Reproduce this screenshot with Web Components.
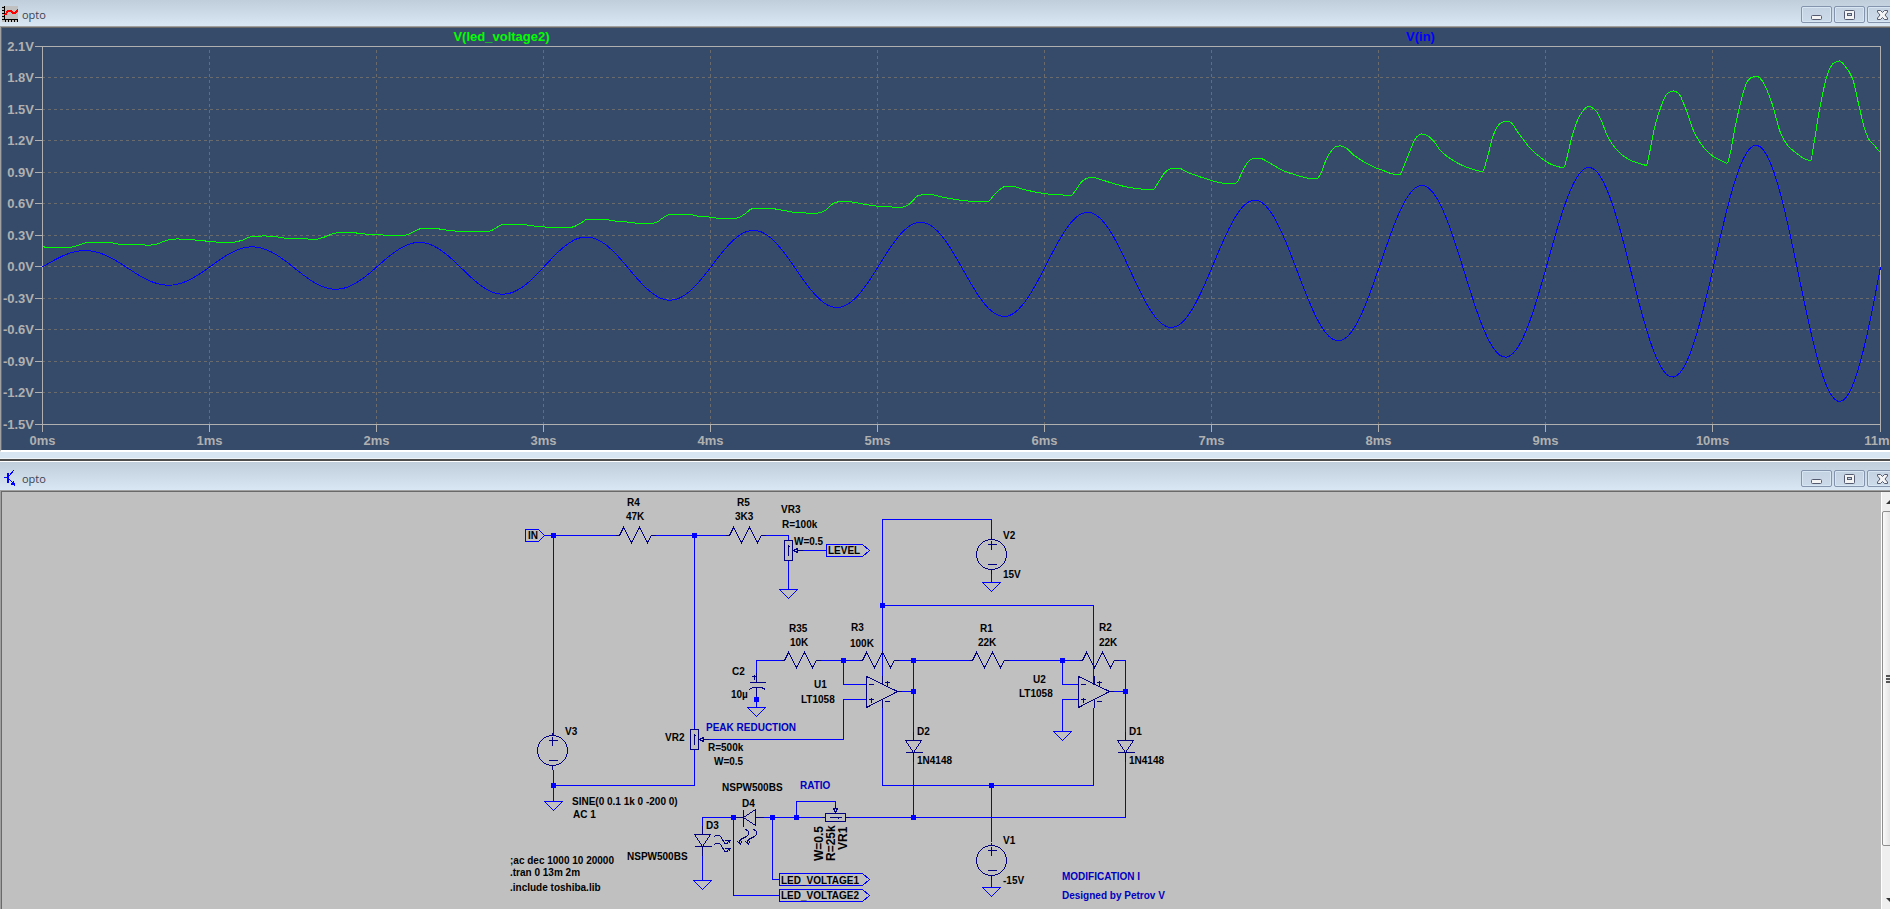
<!DOCTYPE html>
<html lang="en">
<head>
<meta charset="utf-8">
<title>opto</title>
<style>
  html, body {
    height: 100%;
    margin: 0;
    overflow: hidden;
    background: #d7e4f2;
  }
</style>
</head>
<body>
<sim-desktop>
  <mdi-window label="opto">
    <svg slot="icon" width="16" height="16" shape-rendering="crispEdges" aria-hidden="true">
      <rect width="16" height="16" fill="#c0c0c0"/>
      <path d="M2 0h1v13h13v1H2zM0 1h2v1H0zM0 4h2v1H0zM0 7h2v1H0zM0 10h2v1H0zM0 13h2v1H0zM3 14h1v2H3zM6 14h1v2H6zM9 14h1v2H9zM12 14h1v2h-1zM15 14h1v2h-1z" fill="#000"/>
      <path d="M3 9l3-4h3l2 2h2l3-3" fill="none" stroke="#f00" stroke-width="2"/>
    </svg>
    <wave-plot></wave-plot>
  </mdi-window>
  <mdi-window label="opto" class="lower">
    <svg slot="icon" width="16" height="16" shape-rendering="crispEdges" aria-hidden="true">
      <path d="M2 7.500h3M7 6l5-6M7 9l5 5" fill="none" stroke="#00f"/>
      <path d="M5 3h2v10H5zM9 13h2v-2h1v2h1v3h-1v-1h-3z" fill="#00f"/>
    </svg>
    <circuit-sheet></circuit-sheet>
    <scroll-strip></scroll-strip>
  </mdi-window>
</sim-desktop>

<script>
class SimDesktop extends HTMLElement {
  constructor(){
    super();
    this.attachShadow({mode: "open"});
  }

  connectedCallback() {
    // the windows run slightly past the right edge of the desktop
    this.shadowRoot.innerHTML = /* html */`
    <style>
      :host {
        display: grid;
        grid-template-rows: 459fr 450fr;
        grid-template-columns: minmax(0, 1fr);
        height: 100%;
        margin-right: -8px;
      }
    </style>
    <slot></slot>
    `
  }
}

class MdiWindow extends HTMLElement {
  constructor(){
    super();
    this.attachShadow({mode: "open"});
  }

  static get styles(){
    return /* css */`
      :host {
        display: flex;
        flex-direction: column;
        min-height: 0;
        box-sizing: border-box;
        border-bottom: 1px solid #eef3f8;
        background: #d7e4f2;
      }

      :host(.lower) {
        border-top: 2px solid #4d4d4d;
        border-bottom: 0;
        box-shadow: inset 0 1px #fff;
      }

      header {
        display: flex;
        align-items: flex-end;
        gap: 4px;
        height: 23px;
        padding: 0 0 3px 2px;
        background: linear-gradient(#c0cedb, #d9e6f4);
      }

      :host(.lower) header {
        height: 25px;
        margin-top: 1px;
      }

      ::slotted([slot="icon"]) {
        display: block;
        margin-bottom: 1px;
      }

      h1 {
        flex: 1;
        margin: 0;
        font: 11px/16px "Open Sans", "Noto Sans", sans-serif;
        color: #3c4350;
      }

      .buttons {
        display: flex;
        gap: 2px;
      }

      button {
        width: 31px;
        height: 17px;
        padding: 0;
        border: 1px solid #8494ad;
        border-radius: 2px;
        background: linear-gradient(#c4d2e1, #ccdbea);
        box-shadow: inset 0 0 0 1px #d8e5f2;
      }

      button svg {
        display: block;
        margin: 0 auto;
      }

      .client {
        flex: 1;
        min-height: 0;
        display: flex;
        border: 2px solid;
        border-color: #a0a0a0 #fff #fff #a0a0a0;
        box-shadow: inset 1px 1px #696969;
        border-width: 1px 0 2px 1px;
        padding: 1px 0 0 1px;
        margin-bottom: 6px;
      }

      :host(.lower) .client {
        border-bottom: 0;
        margin-bottom: 0;
      }
    `
  }

  connectedCallback() {
    const glyph = d => `<svg width="11" height="10" fill="#f4f4f4" stroke="#545a70" aria-hidden="true">${d}</svg>`;
    this.shadowRoot.innerHTML = /* html */`
    <style>${MdiWindow.styles}</style>
    <header>
      <slot name="icon"></slot>
      <h1>${this.getAttribute("label")}</h1>
      <div class="buttons">
        <button aria-label="Minimize">${glyph('<rect x=".5" y="5.5" width="10" height="4" rx="1"/>')}</button>
        <button aria-label="Maximize">${glyph('<rect x=".5" y=".5" width="10" height="9" rx="1"/><rect x="3.5" y="3.5" width="4" height="2" fill="#c4d2e1"/>')}</button>
        <button aria-label="Close">${glyph('<path d="M.5 .5h3l2 2 2-2h3v1.500L8 5l2.500 3v1.500h-3l-2-2-2 2h-3V8L3 5 .5 2z"/>')}</button>
      </div>
    </header>
    <div class="client"><slot></slot></div>
    `
  }
}

class WavePlot extends HTMLElement {
  constructor(){
    super();
    this.attachShadow({mode: "open"});
  }

  static get styles(){
    return /* css */`
      :host {
        display: block;
        flex: 1;
        min-width: 0;
        overflow: hidden;
        background: #364b6a;
      }

      svg {
        display: block;
        width: 100%;
        height: 100%;
      }

      text {
        font: bold 13px "Liberation Sans", Arial, sans-serif;
        fill: #b0b0b0;
      }

      path {
        fill: none;
        stroke-width: 1;
        shape-rendering: crispEdges;
      }

      .axis { stroke: #b0b0b0; }
      .grid { stroke: #6b6b6b; stroke-dasharray: 3 3; }
      .led { stroke: #00ff00; }
      .in { stroke: #0000ff; }
      text.led { fill: #00ff00; stroke: none; }
      text.in { fill: #0000ff; stroke: none; }
    `
  }

  connectedCallback() {
    this.shadowRoot.innerHTML = `<style>${WavePlot.styles}</style><svg role="img" aria-label="Transient analysis"></svg>`;
    this.draw();
    new ResizeObserver(() => this.draw()).observe(this);
  }

  // cubic segments through all points, handles kept to a third of each step
  smooth(pts) {
    const slope = pts.map((p, i) => {
      const a = pts[i - 1], b = pts[i + 1];
      if (!a || !b) return 0;
      const s1 = (p[1] - a[1]) / (p[0] - a[0]);
      const s2 = (b[1] - p[1]) / (b[0] - p[0]);
      return s1 * s2 <= 0 ? 0 : 2 * s1 * s2 / (s1 + s2);
    });
    let d = `M${pts[0]}`;
    for (let i = 1; i < pts.length; i++) {
      const [x0, y0] = pts[i - 1], [x1, y1] = pts[i];
      const h = (x1 - x0) / 3;
      d += `C${x0 + h} ${y0 + h * slope[i - 1]} ${x1 - h} ${y1 - h * slope[i]} ${x1} ${y1}`;
    }
    return d;
  }

  draw() {
    const box = this.getBoundingClientRect();
    const left = 40, top = 18;
    const right = Math.round(box.width) - 18;
    const bottom = Math.round(box.height) - 26;
    const x = ms => left + (right - left) * ms / 11;
    const y = v => top + (bottom - top) * (2.1 - v) / 3.6;
    const mid = n => Math.floor(n) + 0.5;

    let grid = "", axis = "", labels = "";
    for (let i = 0; i <= 12; i++) {
      const v = (21 - 3 * i) / 10;
      const py = mid(y(v));
      if (i > 0 && i < 12) grid += `M${left} ${py}H${right}`;
      axis += `M${left - 7} ${py}h7`;
      labels += `<text x="${left - 8}" y="${py + 4.5}" text-anchor="end">${v.toFixed(1)}V</text>`;
    }
    for (let ms = 0; ms <= 11; ms++) {
      const px = mid(x(ms));
      if (ms > 0 && ms < 11) grid += `M${px} ${top + 4}V${bottom}`;
      axis += `M${px} ${bottom}v8`;
      labels += `<text x="${px}" y="${bottom + 21}" text-anchor="middle">${ms}ms</text>`;
    }
    axis += `M${left} ${top + 0.5}H${right + 0.5}V${bottom + 0.5}H${left + 0.5}V${top}`;

    // SINE(0 0.1 1k 0 -200 0), saved from 2 ms on
    const sine = [];
    for (let t = 0; t <= 11.0001; t += 0.02) {
      const v = 0.1 * Math.exp(0.2 * (t + 2)) * Math.sin(2 * Math.PI * t);
      sine.push(`${x(t) + 0.5} ${y(v) + 0.5}`);
    }

    const led = WavePlot.led.map(([u, w]) =>
      [x((u - 106) / 415.9) + 0.5, y((801 - w) / 314.8) + 0.5]);

    this.shadowRoot.querySelector("svg").innerHTML = `
      <path class="grid" d="${grid}"/>
      <path class="axis" d="${axis}"/>
      ${labels}
      <path class="led" d="${this.smooth(led)}"/>
      <path class="in" d="M${sine.join("L")}"/>
      <text class="led" x="${x(2.75)}" y="13" text-anchor="middle">V(led_voltage2)</text>
      <text class="in" x="${x(8.25)}" y="13" text-anchor="middle">V(in)</text>`;
  }
}

// V(led_voltage2): three runs of samples, each run 1568 units of time long
WavePlot.led = [
  "106,739 114,742 172,742 210,730 220,727 270,727 300,733 355,734 368,736 388,733 422,719 440,717 475,719 520,724 552,727 580,727 605,720 628,709 660,708 685,710 715,715 765,717 785,718 808,711 832,700 850,697 878,698 908,702 950,705 1008,706 1030,695 1052,685 1078,685 1110,690 1145,694 1218,694 1235,684 1250,674 1298,674 1352,681 1422,682 1445,670 1462,658 1500,658 1530,663",
  "0,667 20,670 55,670 70,665 78,657 102,643 148,643 165,648 205,652 222,655 265,655 285,643 305,626 345,625 385,632 410,637 465,640 483,634 510,608 530,604 545,605 590,614 620,619 678,622 695,613 718,587 735,583 750,584 780,592 825,601 855,604 892,604 905,587 925,565 935,559 955,560 985,570 1040,582 1098,586 1110,570 1125,545 1140,534 1152,532 1170,538 1210,553 1245,563 1285,568 1303,568 1315,548 1333,516 1350,505 1366,505 1390,518 1425,533 1465,547 1485,551 1508,550 1525,513 1540,484 1552,476",
  "0,475 20,486 60,513 95,527 125,535 143,535 150,525 165,480 175,458 188,441 200,438 213,443 235,467 285,502 310,513 335,523 349,523 358,500 372,458 385,421 395,406 403,402 416,406 435,427 450,453 490,488 520,504 545,513 554,514 566,475 580,410 588,387 597,372 612,364 624,367 640,393 670,441 700,474 725,493 745,501 756,503 763,480 777,410 795,350 810,325 818,319 836,332 848,357 868,415 895,458 915,476 940,489 962,496 968,470 983,380 1000,315 1008,292 1017,278 1030,273 1042,280 1057,317 1083,402 1105,443 1128,469 1150,483 1163,490 1169,470 1184,375 1205,270 1212,248 1222,234 1237,229 1250,242 1262,270 1276,315 1297,402 1315,438 1340,464 1360,479 1371,482 1378,440 1392,335 1410,235 1417,210 1428,190 1442,183 1455,196 1475,235 1490,310 1505,385 1517,420 1530,436 1543,455"
].flatMap((run, i) => run.split(" ").map(p => {
  const [u, w] = p.split(",").map(Number);
  return [u + i * 1568, w];
}));

class CircuitSheet extends HTMLElement {
  constructor(){
    super();
    this.attachShadow({mode: "open"});
  }

  static get styles(){
    return /* css */`
      :host {
        display: block;
        flex: 1;
        min-width: 0;
        overflow: hidden;
        background: #c0c0c0;
      }

      svg {
        display: block;
        width: 100%;
        height: 100%;
      }

      path, circle {
        fill: none;
        stroke-width: 1;
        shape-rendering: crispEdges;
      }

      .wire { stroke: #0000ff; }
      .part { stroke: #000080; }
      .node { fill: #0000ff; stroke: none; }

      text {
        font: bold 10px "Liberation Sans", Arial, sans-serif;
        fill: #000;
      }

      text.note { fill: #0000c0; }
      text.tall { font-size: 12px; }
    `
  }

  resistor(x, y) {
    return `M${x - 4} ${y}h4l4 -8 8 15 8 -15 8 15 4 -7h4`;
  }

  source(x, y) {
    return `<circle class="part" cx="${x}" cy="${y}" r="15"/>
      <path class="part" d="M${x - 4} ${y - 10}h9M${x} ${y - 18}v3M${x} ${y - 14}v9M${x - 4} ${y + 10}h9M${x} ${y + 15}v4"/>`;
  }

  opamp(x, y) {
    return `M${x} ${y - 15}V${y + 16}L${x + 31} ${y}ZM${x + 2} ${y - 7}h5M${x + 2} ${y + 8}h5m-2 -2v5
      M${x + 18} ${y - 9}h5m-2 -2v5M${x + 18} ${y + 10}h5M${x + 16} ${y - 16}v9M${x + 16} ${y + 8}v8M${x + 31} ${y}h4`;
  }

  diode(x, y) {
    return `M${x} ${y - 9}v9M${x - 8} ${y}h16l-8 12zM${x - 8} ${y + 12}h17M${x} ${y + 12}v9`;
  }

  ground(x, y) {
    return `M${x - 9} ${y}h18l-9 9z`;
  }

  pot(x, y) {
    return `M${x - 4} ${y - 10}h8v20h-8zM${x} ${y + 5}v-11m-1 2h2M${x + 5} ${y}l4 -2v4zM${x + 9} ${y}h5`;
  }

  flag(x, y, body) {
    return `M${x} ${y - 6}h${body}l7 6 -7 6h-${body}z`;
  }

  connectedCallback() {
    const wires = [
      "M544 55H615M655 55H725M765 55H788V60M788 80V109M802 70H826",
      "M553 55V254M553 289V321M553 305H694V269M694 55V249",
      "M708 259H843V219H866M843 180V204H866M820 180H858M898 180H968M1008 180H1078M1118 180H1125V251",
      "M780 180H756V196M756 213V227M882 204V39H991V56M991 93V102M882 125H1093V204",
      "M1078 204H1062V180M1078 219H1062V251M897 211H913M1109 211H1125M913 180V251",
      "M882 227V305H1093V227M991 305V361M991 398V407M913 281V337M1125 281V337H849",
      "M759 337H821M796 337V321H835V326M739 337H702V347M702 374V400M733 337V415H779M772 337V399H779",
      this.flag(826, 70, 36), this.flag(779, 399, 83), this.flag(779, 415, 83),
      "M525 49H538L544 55 538 61H525Z",
      this.ground(788, 109), this.ground(553, 321), this.ground(756, 227), this.ground(991, 102),
      this.ground(1062, 251), this.ground(991, 407), this.ground(702, 400)
    ];

    const parts = [
      this.resistor(619, 55), this.resistor(729, 55), this.resistor(784, 180),
      this.resistor(862, 180), this.resistor(972, 180), this.resistor(1082, 180),
      this.opamp(866, 211), this.opamp(1078, 211),
      this.diode(913, 260), this.diode(1125, 260), this.diode(702, 354),
      this.pot(788, 70), this.pot(694, 259),
      // VR1 lies on its side, wiper on top
      "M825 333h20v8h-20zM829 337h12m-3 -1v2M835 332l-2 -4h4zM835 328v-4M821 337h4M845 337h4",
      // C2
      "M756 192v10M749 202h16M749 209l3 -2h9l4 2M756 207v8M751 196h5m-2 -2v5",
      // D4 and the light arrows of both LEDs
      "M743 329v17M755 329v16l-12 -8zM735 337h8M755 337h8",
      "M714 356C719 352 721 357 723 361S727 363 728 361M724 360h6l-2 3",
      "M714 364C719 360 721 365 723 369S727 371 728 369M724 368h6l-2 3",
      "M745 349C750 351 749 355 744 357S738 361 740 363M737 361l3 3 1 -3",
      "M753 349C758 351 757 355 752 357S746 361 748 363M745 361l3 3 1 -3"
    ];

    const nodes = [
      [553, 55], [694, 55], [553, 305], [882, 125], [843, 180], [913, 180], [1062, 180], [913, 211],
      [1125, 211], [756, 219], [991, 305], [913, 337], [733, 337], [772, 337], [796, 337]
    ];

    const texts = [
      [528, 59, "IN"], [627, 26, "R4"], [626, 40, "47K"], [737, 26, "R5"], [735, 40, "3K3"],
      [781, 33, "VR3"], [782, 48, "R=100k"], [794, 65, "W=0.5"], [828, 74, "LEVEL"],
      [1003, 59, "V2"], [1003, 98, "15V"],
      [789, 152, "R35"], [790, 166, "10K"], [851, 151, "R3"], [850, 167, "100K"],
      [980, 152, "R1"], [978, 166, "22K"], [1099, 151, "R2"], [1099, 166, "22K"],
      [732, 195, "C2"], [731, 218, "10µ"], [814, 208, "U1"], [801, 223, "LT1058"],
      [1033, 203, "U2"], [1019, 217, "LT1058"],
      [565, 255, "V3"], [665, 261, "VR2"], [708, 271, "R=500k"], [714, 285, "W=0.5"],
      [917, 255, "D2"], [917, 284, "1N4148"], [1129, 255, "D1"], [1129, 284, "1N4148"],
      [572, 325, "SINE(0 0.1 1k 0 -200 0)"], [573, 338, "AC 1"],
      [722, 311, "NSPW500BS"], [742, 327, "D4"], [706, 349, "D3"], [627, 380, "NSPW500BS"],
      [510, 384, ";ac dec 1000 10 20000"], [510, 396, ".tran 0 13m 2m"], [510, 411, ".include toshiba.lib"],
      [781, 404, "LED_VOLTAGE1"], [781, 419, "LED_VOLTAGE2"],
      [1003, 364, "V1"], [1003, 404, "-15V"],
      [706, 251, "PEAK REDUCTION", "note"], [800, 309, "RATIO", "note"],
      [1062, 400, "MODIFICATION I", "note"], [1062, 419, "Designed by Petrov V", "note"]
    ];

    const upright = [[823, 381, "W=0.5"], [835, 381, "R=25k"], [847, 370, "VR1"]];

    this.shadowRoot.innerHTML = /* html */`
    <style>${CircuitSheet.styles}</style>
    <svg role="img" aria-label="Opto compressor schematic">
      <g transform="translate(-1.5 -11.5)">
        <path class="wire" d="${wires.join("")}"/>
        <path class="part" d="${parts.join("")}"/>
        ${this.source(552, 270)}${this.source(991, 74)}${this.source(991, 380)}
        <path class="node" d="${nodes.map(([x, y]) => `M${x - 2.5} ${y - 2.5}h5v5h-5z`).join("")}"/>
      </g>
      <g transform="translate(-2 -12)">
        ${texts.map(([x, y, t, c = ""]) => `<text class="${c}" x="${x}" y="${y}">${t}</text>`).join("")}
        ${upright.map(([x, y, t]) => `<text class="tall" transform="translate(${x} ${y}) rotate(-90)">${t}</text>`).join("")}
      </g>
    </svg>
    `
  }
}

class ScrollStrip extends HTMLElement {
  constructor(){
    super();
    this.attachShadow({mode: "open"});
  }

  connectedCallback() {
    this.shadowRoot.innerHTML = /* html */`
    <style>
      :host {
        display: flex;
        flex-direction: column;
        width: 16px;
        border-left: 1px solid #fff;
        background: #efefef;
      }

      button {
        display: flex;
        justify-content: center;
        align-items: center;
        height: 19px;
        padding: 0;
        border: 0;
        background: none;
      }

      .track {
        flex: 1;
        display: flex;
        flex-direction: column;
      }

      .thumb {
        flex: 334;
        display: flex;
        justify-content: center;
        align-items: center;
        border: 1px solid #8e8e8e;
        border-radius: 2px;
        background: linear-gradient(90deg, #fafafa, #e4e4e4 50%, #d0d0d0);
      }

      .rest { flex: 44; }
    </style>
    <button aria-label="Scroll up"><svg width="8" height="4"><path d="M0 4L4 0l4 4z" fill="#333"/></svg></button>
    <div class="track">
      <div class="thumb">
        <svg width="8" height="8" shape-rendering="crispEdges"><path d="M0 0h8v2H0zM0 3h8v2H0zM0 6h8v2H0z" fill="#555"/></svg>
      </div>
      <div class="rest"></div>
    </div>
    <button aria-label="Scroll down"><svg width="8" height="4"><path d="M0 0h8L4 4z" fill="#333"/></svg></button>
    `
  }
}

customElements.define('sim-desktop', SimDesktop);
customElements.define('mdi-window', MdiWindow);
customElements.define('wave-plot', WavePlot);
customElements.define('circuit-sheet', CircuitSheet);
customElements.define('scroll-strip', ScrollStrip);
</script>
</body>
</html>
